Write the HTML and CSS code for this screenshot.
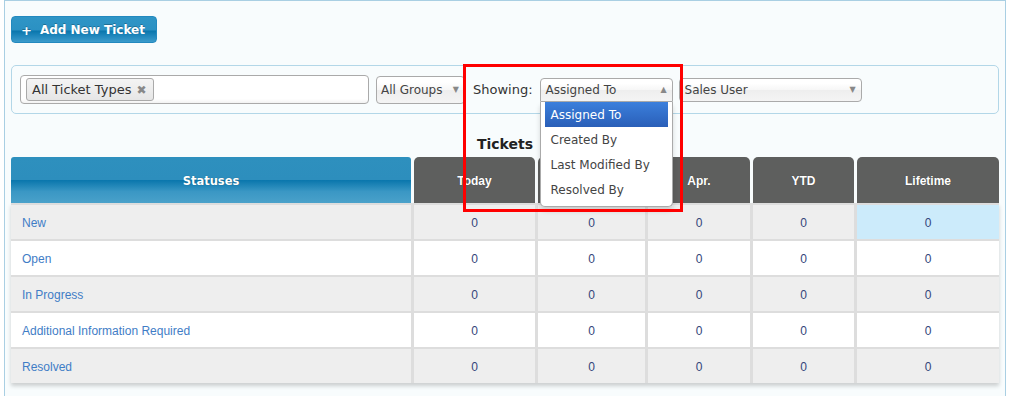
FILE: index.html
```html
<!DOCTYPE html>
<html>
<head>
<meta charset="utf-8">
<link rel="stylesheet" href="styles.css">
</head>
<body>
<div class="page">
  <div class="toolbar">
    <button class="btn-add"><span class="plus">+</span>Add New Ticket</button>
  </div>
  <div class="filters">
    <div class="multi">
      <span class="tag">All Ticket Types <span class="tag-x">✖</span></span>
    </div>
    <div class="select sel-groups"><span>All Groups</span><span class="arrow">▼</span></div>
    <span class="label">Showing:</span>
    <div class="select-wrap">
      <div class="select sel-show open"><span>Assigned To</span><span class="arrow">▲</span></div>
      <ul class="menu">
        <li class="active">Assigned To</li>
        <li>Created By</li>
        <li>Last Modified By</li>
        <li>Resolved By</li>
      </ul>
    </div>
    <div class="select sel-user"><span>Sales User</span><span class="arrow">▼</span></div>
  </div>
  <h2 class="title">Tickets</h2>
  <div class="table">
    <div class="thead">
      <div class="th th-status">Statuses</div>
      <div class="th">Today</div>
      <div class="th">Mar.</div>
      <div class="th">Apr.</div>
      <div class="th">YTD</div>
      <div class="th">Lifetime</div>
    </div>
    <div class="tbody">
      <div class="td name odd">New</div><div class="td odd">0</div><div class="td odd">0</div><div class="td odd">0</div><div class="td odd">0</div><div class="td hl">0</div>
      <div class="td name">Open</div><div class="td">0</div><div class="td">0</div><div class="td">0</div><div class="td">0</div><div class="td">0</div>
      <div class="td name odd">In Progress</div><div class="td odd">0</div><div class="td odd">0</div><div class="td odd">0</div><div class="td odd">0</div><div class="td odd">0</div>
      <div class="td name">Additional Information Required</div><div class="td">0</div><div class="td">0</div><div class="td">0</div><div class="td">0</div><div class="td">0</div>
      <div class="td name odd">Resolved</div><div class="td odd">0</div><div class="td odd">0</div><div class="td odd">0</div><div class="td odd">0</div><div class="td odd">0</div>
    </div>
  </div>
</div>
<div class="annot"></div>
</body>
</html>
```
FILE: styles.css
```css
html, body { margin: 0; padding: 0; background: #fff; }
body { position: relative; font-family: "DejaVu Sans", Verdana, sans-serif; color: #333; }

.page {
  margin-left: 4px;
  width: 1002px;
  box-sizing: border-box;
  border: 1px solid #a9cfe3;
  border-bottom: none;
  background: #f8fcfd;
  padding: 15px 6px 30px 6px;
  min-height: 420px;
}

.toolbar { height: 27px; }
.btn-add {
  height: 27px;
  width: 146px;
  box-sizing: border-box;
  border: 1px solid #2389bf;
  border-radius: 4px;
  background: linear-gradient(#2f95c6 0%, #2b91c3 52%, #0a76ad 56%, #2289be 78%, #3c9bcb 100%);
  color: #fff;
  font-family: "DejaVu Sans", Verdana, sans-serif;
  font-weight: bold;
  font-size: 12px;
  padding: 1px 0 0 9px;
  text-align: left;
  text-shadow: 0 -1px 0 rgba(0,0,0,.25);
  display: flex;
  align-items: center;
}
.btn-add .plus { font-size: 13px; margin-right: 8px; }

.filters {
  margin-top: 22px;
  height: 49px;
  box-sizing: border-box;
  border: 1px solid #b3d7e8;
  border-radius: 5px;
  display: flex;
  align-items: center;
  padding: 0 8px;
  background: #f8fcfd;
}

.multi {
  width: 349px;
  height: 29px;
  box-sizing: border-box;
  border: 1px solid #aaa;
  border-radius: 4px;
  background: linear-gradient(#fff 85%, #f2f2f2 100%);
  display: flex;
  align-items: center;
  padding-left: 5px;
}
.tag {
  height: 23px;
  box-sizing: border-box;
  border: 1px solid #aaa;
  border-radius: 3px;
  background: linear-gradient(#f4f4f4, #e6e6e6);
  font-size: 13px;
  color: #333;
  display: flex;
  align-items: center;
  padding: 0 6px 0 5px;
  margin-top: 0;
}
.tag-x { font-size: 12px; color: #888; margin-left: 5px; }

.select {
  box-sizing: border-box;
  border: 1px solid #aaa;
  border-radius: 4px;
  background: linear-gradient(#fff 20%, #f6f6f6 50%, #eee 52%, #f4f4f4 100%);
  font-size: 12px;
  color: #444;
  display: flex;
  align-items: center;
  justify-content: space-between;
  padding: 0 5px 0 5px;
}
.select .arrow { font-size: 8px; color: #888; }
.sel-groups { width: 89px; height: 28px; margin-left: 7px; padding-left: 4px; }
.label { font-size: 13px; color: #333; margin-left: 8px; margin-right: 7px; }
.select-wrap { position: relative; }
.sel-show { width: 133px; height: 24px; }
.sel-show.open { border-radius: 4px 4px 0 0; }
.sel-user { width: 183px; height: 24px; margin-left: 6px; }

.menu {
  position: absolute;
  top: 24px;
  left: 0;
  width: 133px;
  box-sizing: border-box;
  margin: 0;
  padding: 0 4px 4px 4px;
  list-style: none;
  background: #fff;
  border: 1px solid #aaa;
  border-top: none;
  border-radius: 0 0 5px 5px;
  box-shadow: 0 4px 5px rgba(0,0,0,.15);
  z-index: 5;
}
.menu li {
  height: 25px;
  line-height: 26px;
  font-size: 12px;
  color: #444;
  padding-left: 6px;
}
.menu li.active {
  background: linear-gradient(#3b7fdc, #2a5fb8);
  color: #fff;
}

.title {
  margin: 22px 0 4px 0;
  height: 17px;
  line-height: 17px;
  text-align: center;
  font-size: 14px;
  font-weight: bold;
  color: #222;
}

.table { width: 988px; }
.thead {
  display: grid;
  grid-template-columns: 400px 121px 107px 102px 101px 142px;
  column-gap: 3px;
  height: 46px;
}
.th {
  background: #5e5f5e;
  border-radius: 5px 5px 0 0;
  color: #fff;
  font-family: "Liberation Sans", Arial, sans-serif;
  font-weight: bold;
  font-size: 12px;
  display: flex;
  align-items: center;
  justify-content: center;
  padding-top: 1px;
  text-shadow: 0 0 1px rgba(0,0,0,.4);
}
.th-status {
  border-radius: 3px 3px 0 0;
  background: linear-gradient(#2e90be 0%, #2d8ebd 49%, #0b77ad 51%, #3a97c4 75%, #4aa1ca 100%);
  font-family: "DejaVu Sans", Verdana, sans-serif;
  font-size: 11.5px;
}

.tbody {
  display: grid;
  grid-template-columns: 400px 121px 107px 102px 101px 142px;
  grid-auto-rows: 34px;
  column-gap: 3px;
  row-gap: 2px;
  padding-top: 2px;
  background: #dddddd;
  box-shadow: 0 3px 4px rgba(0,0,0,.18);
}
.td {
  background: #fff;
  font-family: "Liberation Sans", Arial, sans-serif;
  font-size: 12px;
  color: #33457a;
  display: flex;
  align-items: center;
  justify-content: center;
  padding-top: 1px;
}
.td.odd { background: #eeeeee; }
.td.hl { background: #ccebfb; }
.td.name {
  justify-content: flex-start;
  padding-left: 11px;
  color: #3f7dc6;
}

.annot {
  position: absolute;
  left: 463px;
  top: 64px;
  width: 220px;
  height: 148px;
  box-sizing: border-box;
  border: 3px solid #ff0000;
  z-index: 10;
  pointer-events: none;
}
```
